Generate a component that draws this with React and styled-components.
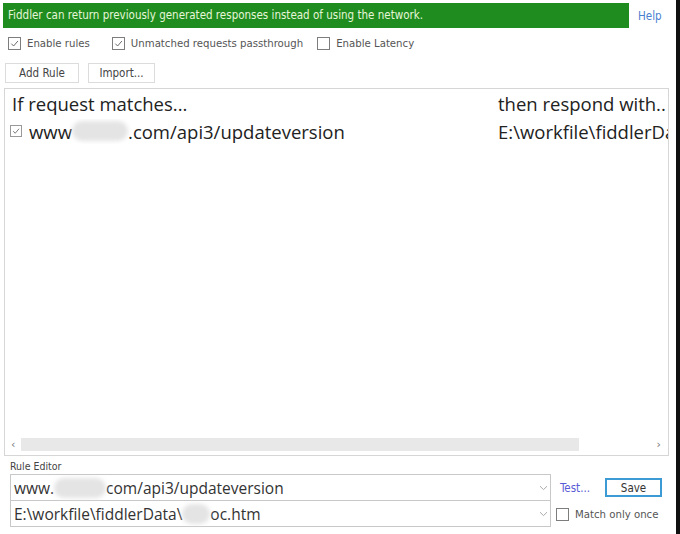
import React from "react";
import styled, { createGlobalStyle } from "styled-components";

const GlobalStyle = createGlobalStyle`
  html, body {
    margin: 0;
    padding: 0;
    background: #fff;
  }
  body {
    width: 680px;
    height: 534px;
    overflow: hidden;
    font-family: "DejaVu Sans", "Liberation Sans", sans-serif;
  }
`;

const Page = styled.div`
  display: flex;
  width: 680px;
  height: 534px;
`;

const Panel = styled.div`
  width: 676px;
  display: flex;
  flex-direction: column;
  padding: 3px 0 0 0;
  box-sizing: border-box;
`;

const Edge = styled.div`
  width: 4px;
  background: #111;
`;

const TopRow = styled.div`
  display: flex;
  align-items: center;
  height: 25px;
`;

const Banner = styled.div`
  margin-left: 3px;
  width: 626px;
  height: 25px;
  background: #1f8c1f;
  color: #e6f6d8;
  font-family: "DejaVu Sans Condensed", "DejaVu Sans", sans-serif;
  font-size: 11.5px;
  line-height: 25px;
  padding-left: 5px;
  box-sizing: border-box;
  white-space: nowrap;
`;

const HelpLink = styled.span`
  margin-left: 9px;
  font-size: 11.5px;
  color: #4a7fd0;
  font-family: "DejaVu Sans Condensed", "DejaVu Sans", sans-serif;
`;

const OptionsRow = styled.div`
  display: flex;
  align-items: center;
  height: 24px;
  margin-top: 3px;
  padding-left: 8px;
`;

const OptionLabel = styled.label`
  display: flex;
  align-items: center;
  gap: 6px;
  margin-right: ${({ $gap }) => $gap}px;
  font-family: "DejaVu Sans Condensed", "DejaVu Sans", sans-serif;
  font-size: 11.3px;
  color: #555;
  white-space: nowrap;
`;

const Box = styled.span`
  width: 11px;
  height: 11px;
  border: 1px solid #7d7d7d;
  background: #fff;
  display: inline-flex;
  align-items: center;
  justify-content: center;
  flex: none;
`;

const ButtonRow = styled.div`
  display: flex;
  gap: 9px;
  height: 20px;
  margin-top: 8px;
  padding-left: 5px;
`;

const Button = styled.button`
  width: ${({ $w }) => $w}px;
  height: 20px;
  border: 1px solid #dcdcdc;
  background: #fff;
  color: #444;
  font-family: "DejaVu Sans Condensed", "DejaVu Sans", sans-serif;
  font-size: 11.5px;
  padding: 0;
`;

const RulesList = styled.div`
  margin: 5px 0 0 4px;
  width: 665px;
  height: 368px;
  border: 1px solid #d6d6d6;
  box-sizing: border-box;
  display: flex;
  flex-direction: column;
  overflow: hidden;
`;

const ListRow = styled.div`
  display: grid;
  grid-template-columns: 492px 1fr;
  height: ${({ $h }) => $h}px;
  align-items: center;
  font-family: "Open Sans", "Noto Sans", sans-serif;
  font-size: 18.5px;
  color: #222;
  white-space: nowrap;
`;

const Cell = styled.div`
  display: flex;
  align-items: center;
  overflow: hidden;
  padding-left: ${({ $pad }) => $pad}px;
`;

const SmallCheck = styled.span`
  width: 10px;
  height: 10px;
  border: 1px solid #999;
  margin-right: 7px;
  display: inline-flex;
  align-items: center;
  justify-content: center;
  flex: none;
`;

const Blur = styled.span`
  display: inline-block;
  width: ${({ $w }) => $w}px;
  height: 20px;
  border-radius: 10px;
  background: #e4e4e4;
  filter: blur(2px);
  flex: none;
`;

const ListBody = styled.div`
  flex: 1;
`;

const HScroll = styled.div`
  display: flex;
  align-items: center;
  height: 16px;
  margin-bottom: 3px;
  padding: 0 4px 0 6px;
  color: #777;
  font-family: "DejaVu Sans", sans-serif;
  font-size: 11px;
`;

const Thumb = styled.div`
  height: 13px;
  width: 558px;
  margin-left: 6px;
  background: #e8e8e8;
`;

const ArrowEnd = styled.span`
  margin-left: auto;
  padding-right: 3px;
`;

const EditorLabel = styled.div`
  margin: 2px 0 0 10px;
  height: 16px;
  line-height: 16px;
  font-family: "DejaVu Sans Condensed", "DejaVu Sans", sans-serif;
  font-size: 10.5px;
  color: #444;
`;

const Editor = styled.div`
  display: grid;
  grid-template-columns: 541px 1fr;
  margin-left: 10px;
`;

const Combo = styled.div`
  height: ${({ $joined }) => ($joined ? 26 : 27)}px;
  border: 1px solid #c8c8c8;
  border-top: ${({ $joined }) => ($joined ? "none" : "1px solid #c8c8c8")};
  box-sizing: border-box;
  display: flex;
  align-items: center;
  padding-left: 3px;
  font-family: "Open Sans", "Noto Sans", sans-serif;
  font-size: 15.5px;
  color: #333;
  white-space: nowrap;
`;

const Chevron = styled.span`
  margin-left: auto;
  width: 14px;
  display: flex;
  justify-content: center;
`;

const SideRow = styled.div`
  display: flex;
  align-items: center;
  padding-left: ${({ $pad }) => $pad}px;
`;

const TestLink = styled.span`
  font-family: "DejaVu Sans Condensed", "DejaVu Sans", sans-serif;
  font-size: 11.5px;
  color: #5b5bd6;
  margin-right: 15px;
`;

const SaveButton = styled.button`
  width: 57px;
  height: 19px;
  border: 2px solid #3c9ad4;
  background: #fff;
  color: #333;
  font-family: "DejaVu Sans Condensed", "DejaVu Sans", sans-serif;
  font-size: 11.5px;
  padding: 0;
`;

const Tick = ({ size = 9 }) => (
  <svg width={size} height={size} viewBox="0 0 10 10">
    <path d="M1.5 5.2 L4 7.8 L8.8 2.2" fill="none" stroke="#6a6a6a" strokeWidth="1.1" />
  </svg>
);

const ChevronDown = () => (
  <svg width="9" height="6" viewBox="0 0 9 6">
    <path d="M1 1.2 L4.5 4.6 L8 1.2" fill="none" stroke="#aaa" strokeWidth="1" />
  </svg>
);

const Option = ({ checked, gap, children }) => (
  <OptionLabel $gap={gap}>
    <Box>{checked && <Tick />}</Box>
    {children}
  </OptionLabel>
);

export default function App() {
  return (
    <>
      <GlobalStyle />
      <Page>
        <Panel>
          <TopRow>
            <Banner>Fiddler can return previously generated responses instead of using the network.</Banner>
            <HelpLink>Help</HelpLink>
          </TopRow>

          <OptionsRow>
            <Option checked gap={22}>Enable rules</Option>
            <Option checked gap={14}>Unmatched requests passthrough</Option>
            <Option gap={0}>Enable Latency</Option>
          </OptionsRow>

          <ButtonRow>
            <Button $w={74}>Add Rule</Button>
            <Button $w={67}>Import...</Button>
          </ButtonRow>

          <RulesList>
            <ListRow $h={28}>
              <Cell $pad={7}>If request matches...</Cell>
              <Cell $pad={1}>then respond with..</Cell>
            </ListRow>
            <ListRow $h={28}>
              <Cell $pad={5}>
                <SmallCheck>
                  <Tick size={8} />
                </SmallCheck>
                www
                <Blur $w={56} />
                .com/api3/updateversion
              </Cell>
              <Cell $pad={1}>E:\workfile\fiddlerData\</Cell>
            </ListRow>
            <ListBody />
            <HScroll>
              <span>&lsaquo;</span>
              <Thumb />
              <ArrowEnd>&rsaquo;</ArrowEnd>
            </HScroll>
          </RulesList>

          <EditorLabel>Rule Editor</EditorLabel>

          <Editor>
            <Combo>
              www.
              <Blur $w={52} />
              com/api3/updateversion
              <Chevron>
                <ChevronDown />
              </Chevron>
            </Combo>
            <SideRow $pad={9}>
              <TestLink>Test...</TestLink>
              <SaveButton>Save</SaveButton>
            </SideRow>
            <Combo $joined>
              E:\workfile\fiddlerData\
              <Blur $w={28} />
              oc.htm
              <Chevron>
                <ChevronDown />
              </Chevron>
            </Combo>
            <SideRow $pad={5}>
              <Option gap={0}>Match only once</Option>
            </SideRow>
          </Editor>
        </Panel>
        <Edge />
      </Page>
    </>
  );
}
